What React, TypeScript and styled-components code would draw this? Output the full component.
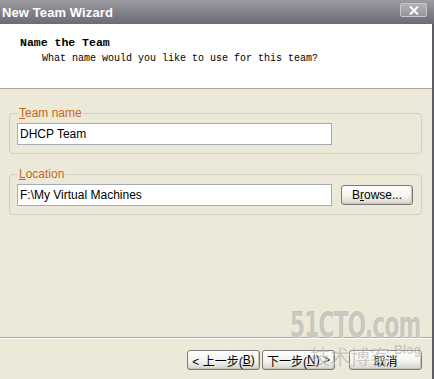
import React from "react";
import styled, { createGlobalStyle } from "styled-components";

const GlobalStyle = createGlobalStyle`
  html, body {
    margin: 0;
    padding: 0;
    background: #ece9d8;
  }
  * {
    box-sizing: border-box;
  }
`;

export default function App() {
  return (
    <>
      <GlobalStyle />
      <Window>
        <TitleBar>
          <Title>New Team Wizard</Title>
          <CloseButton aria-label="close">
            <svg width="10" height="9" viewBox="0 0 10 9">
              <path d="M1 0.5 L9 8.5 M9 0.5 L1 8.5" stroke="#fff" strokeWidth="2" />
            </svg>
          </CloseButton>
        </TitleBar>
        <Body>
          <Header>
            <HeaderTitle>Name the Team</HeaderTitle>
            <HeaderText>What name would you like to use for this team?</HeaderText>
          </Header>
          <Content>
            <Group>
              <Legend>
                <u>T</u>eam name
              </Legend>
              <Row>
                <TextBox defaultValue="DHCP Team" />
              </Row>
            </Group>
            <Group>
              <Legend>
                <u>L</u>ocation
              </Legend>
              <Row>
                <TextBox defaultValue="F:\My Virtual Machines" />
                <Button $width={72}>
                  B<u>r</u>owse...
                </Button>
              </Row>
            </Group>
          </Content>
          <Footer>
            <Button $width={73}>&lt; 上一步(<u>B</u>)</Button>
            <Button $width={73}>下一步(<u>N</u>) &gt;</Button>
            <Button $width={73} $gap={12}>
              取消
            </Button>
          </Footer>
          <Watermark aria-hidden="true">
            <Logo>51CTO.com</Logo>
            <LogoSub>
              技术博客<small>Blog</small>
            </LogoSub>
          </Watermark>
        </Body>
      </Window>
    </>
  );
}

const Window = styled.div`
  width: 434px;
  height: 379px;
  display: flex;
  flex-direction: column;
  background: #ece9d8;
  font-family: "Liberation Sans", Arial, sans-serif;
  font-size: 12px;
  color: #000;
  overflow: hidden;
`;

const TitleBar = styled.div`
  height: 24px;
  flex: none;
  display: flex;
  align-items: center;
  justify-content: space-between;
  padding: 0 7px 0 2px;
  background: linear-gradient(#9d9ca3 0%, #85848c 45%, #6d6c74 100%);
`;

const Title = styled.span`
  color: #fff;
  font-weight: bold;
  font-size: 13px;
  letter-spacing: 0.1px;
`;

const CloseButton = styled.div`
  width: 27px;
  height: 14px;
  margin-top: -4px;
  display: flex;
  align-items: center;
  justify-content: center;
  border: 1px solid #c9c8cf;
  border-radius: 2px;
  background: linear-gradient(#b4b3ba, #95949c);
`;

const Body = styled.div`
  position: relative;
  flex: 1;
  display: flex;
  flex-direction: column;
  border-right: 2px solid #5f5e66;
`;

const Header = styled.div`
  height: 65px;
  flex: none;
  background: #fff;
  border-bottom: 1px solid #a8a7a0;
  padding: 12px 0 0 20px;
  font-family: "Liberation Mono", "DejaVu Sans Mono", monospace;
`;

const HeaderTitle = styled.div`
  font-weight: bold;
  font-size: 11.5px;
  line-height: 14px;
`;

const HeaderText = styled.div`
  font-size: 10px;
  line-height: 14px;
  margin: 2px 0 0 22px;
`;

const Content = styled.div`
  flex: 1;
  display: flex;
  flex-direction: column;
  gap: 14px;
  padding: 18px 10px 0 9px;
  border-bottom: 1px solid #a8a7a0;
`;

const Group = styled.fieldset`
  margin: 0;
  padding: 3px 8px 8px 7px;
  border: 1px solid #d3d0bf;
  border-radius: 4px;
`;

const Legend = styled.legend`
  color: #c8671c;
  padding: 0 1px;
  margin-left: 1px;
  font-size: 12px;
  line-height: 13px;
`;

const Row = styled.div`
  display: flex;
  align-items: center;
  gap: 9px;
`;

const TextBox = styled.input`
  width: 315px;
  height: 22px;
  border: 1px solid #a5acb5;
  background: #fff;
  padding: 0 2px;
  font-family: "Liberation Sans", Arial, sans-serif;
  font-size: 12px;
  color: #000;
  outline: none;
`;

const Button = styled.div<{ $width: number; $gap?: number }>`
  width: ${(p) => p.$width}px;
  height: 20px;
  margin-left: ${(p) => p.$gap ?? 0}px;
  display: flex;
  align-items: center;
  justify-content: center;
  white-space: nowrap;
  border: 1px solid #7b7a74;
  border-radius: 3px;
  background: linear-gradient(#ffffff 0%, #f4f3ee 55%, #d6d3c8 100%);
  box-shadow: inset -1px -1px 0 #c7c4b8;
  font-family: "Liberation Sans", "Noto Sans CJK SC", sans-serif;
  font-size: 12px;
  color: #000;
`;

const Footer = styled.div`
  height: 41px;
  flex: none;
  border-top: 1px solid #fff;
  display: flex;
  align-items: flex-start;
  justify-content: flex-end;
  gap: 2px;
  padding: 11px 10px 0 0;
`;

const Watermark = styled.div`
  position: absolute;
  right: 11px;
  bottom: 12px;
  z-index: 1;
  display: flex;
  flex-direction: column;
  align-items: flex-end;
  pointer-events: none;
  color: rgba(160, 158, 150, 0.5);
  text-shadow: 1px 1px 0 rgba(255, 255, 255, 0.45);
`;

const Logo = styled.div`
  font-family: "DejaVu Sans Condensed", "DejaVu Sans", sans-serif;
  font-stretch: condensed;
  font-weight: bold;
  font-size: 31px;
  line-height: 26px;
  letter-spacing: -1px;
  transform: scale(0.78, 1.15);
  transform-origin: right bottom;
  margin-bottom: 2px;
`;

const LogoSub = styled.div`
  font-family: "Noto Sans CJK SC", sans-serif;
  font-size: 20px;
  line-height: 20px;
  margin-top: 6px;
  display: flex;
  align-items: flex-start;
  gap: 4px;
  & small {
    font-family: "Liberation Sans", sans-serif;
    font-size: 12px;
    line-height: 12px;
    font-weight: bold;
    margin-top: -3px;
  }
`;
